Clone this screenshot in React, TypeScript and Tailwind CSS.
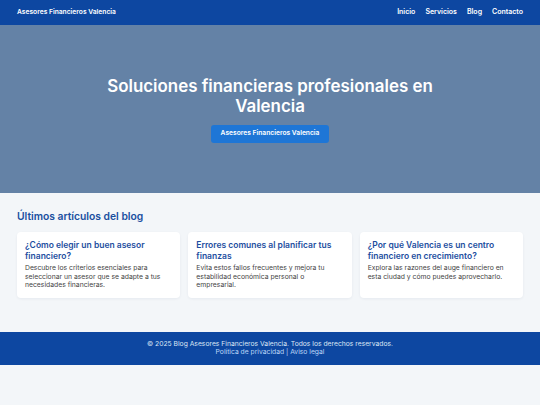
import React from 'react';

const posts = [
  {
    title: '¿Cómo elegir un buen asesor financiero?',
    excerpt: 'Descubre los criterios esenciales para seleccionar un asesor que se adapte a tus necesidades financieras.',
  },
  {
    title: 'Errores comunes al planificar tus finanzas',
    excerpt: 'Evita estos fallos frecuentes y mejora tu estabilidad económica personal o empresarial.',
  },
  {
    title: '¿Por qué Valencia es un centro financiero en crecimiento?',
    excerpt: 'Explora las razones del auge financiero en esta ciudad y cómo puedes aprovecharlo.',
  },
];

export default function App() {
  return (
    <div className="min-h-[405px] bg-[#f3f6f9] font-['Inter','Liberation_Sans',sans-serif]">
      {/* Header */}
      <header className="flex h-[25px] items-center justify-between bg-[#0d47a1] px-[17px] text-white">
        <span className="text-[6.7px] font-semibold">Asesores Financieros Valencia</span>
        <nav className="flex gap-[10px] text-[7px] font-semibold">
          <a href="#">Inicio</a>
          <a href="#">Servicios</a>
          <a href="#">Blog</a>
          <a href="#">Contacto</a>
        </nav>
      </header>

      {/* Hero */}
      <section className="flex h-[168px] flex-col items-center justify-center bg-[#6482a6] text-center text-white">
        <h1 className="max-w-[345px] text-[16.9px] leading-[20px] font-semibold">
          Soluciones financieras profesionales en Valencia
        </h1>
        <button className="mt-[9px] h-[18px] rounded-[3px] bg-[#1e76d6] px-[10px] text-[6.7px] font-semibold text-white">
          Asesores Financieros Valencia
        </button>
      </section>

      {/* Blog */}
      <section className="px-[17px] pt-[16px] pb-[34px]">
        <h2 className="text-[10.3px] leading-[14px] font-semibold text-[#1a4fa0]">Últimos artículos del blog</h2>
        <div className="mt-[9px] grid grid-cols-3 gap-[8px]">
          {posts.map((p) => (
            <article key={p.title} className="rounded-[4px] bg-white px-[8px] pt-[8px] pb-[8px] shadow-[0_1px_3px_rgba(15,40,80,0.06)]">
              <h3 className="text-[8.5px] leading-[10.5px] font-semibold text-[#1d4ea0]">{p.title}</h3>
              <p className="mt-[3px] text-[6.8px] leading-[8.5px] text-[#444]">{p.excerpt}</p>
            </article>
          ))}
        </div>
      </section>

      {/* Footer */}
      <footer className="flex h-[33px] flex-col items-center justify-center bg-[#0d47a1] text-center text-[6.75px] leading-[8.5px]">
        <p className="text-[#dbe6f5]">© 2025 Blog Asesores Financieros Valencia. Todos los derechos reservados.</p>
        <p className="text-[#bbd6f7]">
          <a href="#">Política de privacidad</a> | <a href="#">Aviso legal</a>
        </p>
      </footer>
    </div>
  );
}
